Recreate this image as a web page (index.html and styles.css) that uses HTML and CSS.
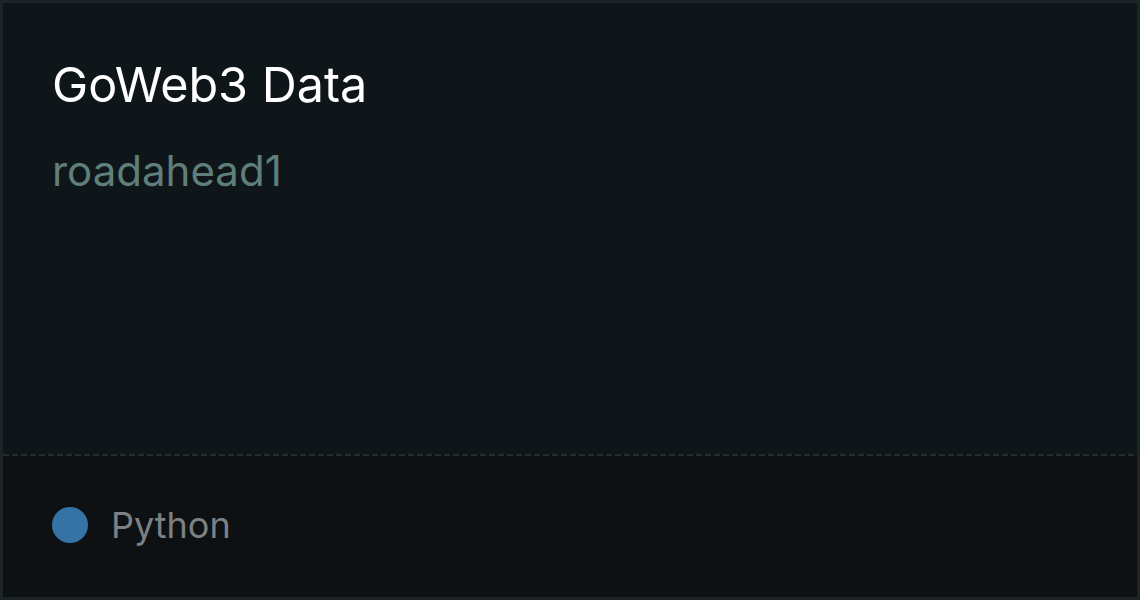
FILE: index.html
```html
<!DOCTYPE html>
<html lang="en">
<head>
    <meta charset="UTF-8">
    <meta name="viewport" content="width=device-width, initial-scale=1.0">
    <title>GoWeb3 Data</title>
    <link rel="stylesheet" href="styles.css">
</head>
<body>
    <div class="card">
        <div class="card-top">
            <h1 class="repo-name">GoWeb3 Data</h1>
            <p class="repo-owner">roadahead1</p>
        </div>
        <div class="divider"></div>
        <div class="card-bottom">
            <span class="lang-dot"></span>
            <span class="lang-name">Python</span>
        </div>
    </div>
</body>
</html>
```

FILE: styles.css
```css
html, body {
    margin: 0;
    padding: 0;
    height: 100%;
}
body {
    font-family: Inter, "Noto Sans", sans-serif;
    background-color: #0f1619;
}
.card {
    box-sizing: border-box;
    height: 600px;
    border: 3px solid #1c2428;
    display: flex;
    flex-direction: column;
}
.card-top {
    flex: 1;
    background-color: #0f1619;
    padding: 53px 49px 0;
}
.repo-name {
    margin: 0;
    font-size: 48.5px;
    font-weight: 400;
    line-height: 58px;
    color: #ffffff;
}
.repo-owner {
    margin: 32px 0 0;
    font-size: 42px;
    line-height: 50px;
    color: #5f7f7a;
}
.divider {
    height: 2px;
    background: repeating-linear-gradient(to right, #262c30 0 6px, transparent 6px 9px);
    background-color: #0e1316;
}
.card-bottom {
    height: 141px;
    box-sizing: border-box;
    background-color: #0d1114;
    padding: 0 49px 3px;
    display: flex;
    align-items: center;
    gap: 23px;
}
.lang-dot {
    width: 36px;
    height: 36px;
    border-radius: 50%;
    background-color: #3572a5;
}
.lang-name {
    font-size: 36px;
    line-height: 44px;
    color: #7d8184;
}
```
